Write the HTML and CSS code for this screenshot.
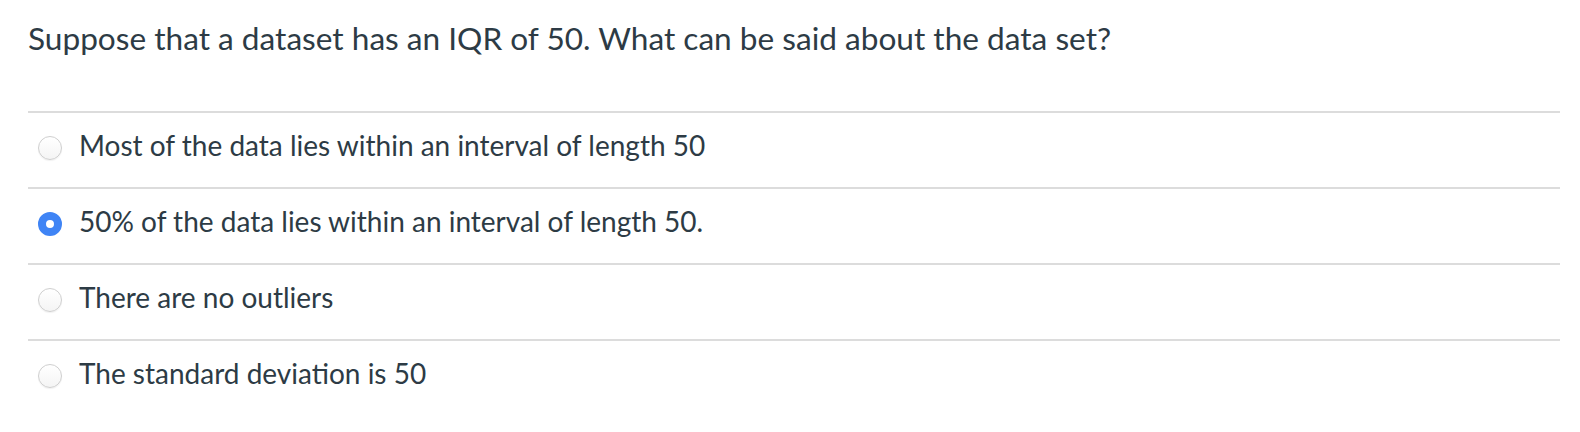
FILE: index.html
```html
<!DOCTYPE html>
<html>
<head>
<meta charset="utf-8">
<link rel="stylesheet" href="styles.css">
</head>
<body>
<div class="question">
  <div class="prompt">Suppose that a dataset has an IQR of 50. What can be said about the data set?</div>
  <div class="answers">
    <label class="answer"><span class="radio"></span><span class="text">Most of the data lies within an interval of length 50</span></label>
    <label class="answer"><span class="radio checked"></span><span class="text">50% of the data lies within an interval of length 50.</span></label>
    <label class="answer"><span class="radio"></span><span class="text">There are no outliers</span></label>
    <label class="answer"><span class="radio"></span><span class="text">The standard deviation is 50</span></label>
  </div>
</div>
</body>
</html>
```

FILE: styles.css
```css
html, body {
  margin: 0;
  padding: 0;
  background: #ffffff;
}
body {
  font-family: Lato, "Open Sans", sans-serif;
  color: #2d3b45;
}
.question {
  padding: 16px 20px 0 28px;
}
.prompt {
  font-size: 31.6px;
  line-height: 44px;
  padding-bottom: 51px;
}
.answers {
  display: flex;
  flex-direction: column;
}
.answer {
  display: flex;
  align-items: flex-start;
  padding-top: 15px;
  height: 59px;
  border-top: 2px solid #dcdcdc;
}
.radio {
  box-sizing: border-box;
  width: 24px;
  height: 24px;
  border-radius: 50%;
  border: 1px solid #cfcfcf;
  background: linear-gradient(#ffffff, #f4f4f4);
  box-shadow: 0 1px 1px rgba(0, 0, 0, 0.06);
  margin: 8px 17px 0 10px;
  flex: none;
}
.radio.checked {
  border: 8px solid #3f84f5;
  background: #ffffff;
  box-shadow: none;
}
.text {
  font-size: 28px;
  line-height: 34px;
}
```
